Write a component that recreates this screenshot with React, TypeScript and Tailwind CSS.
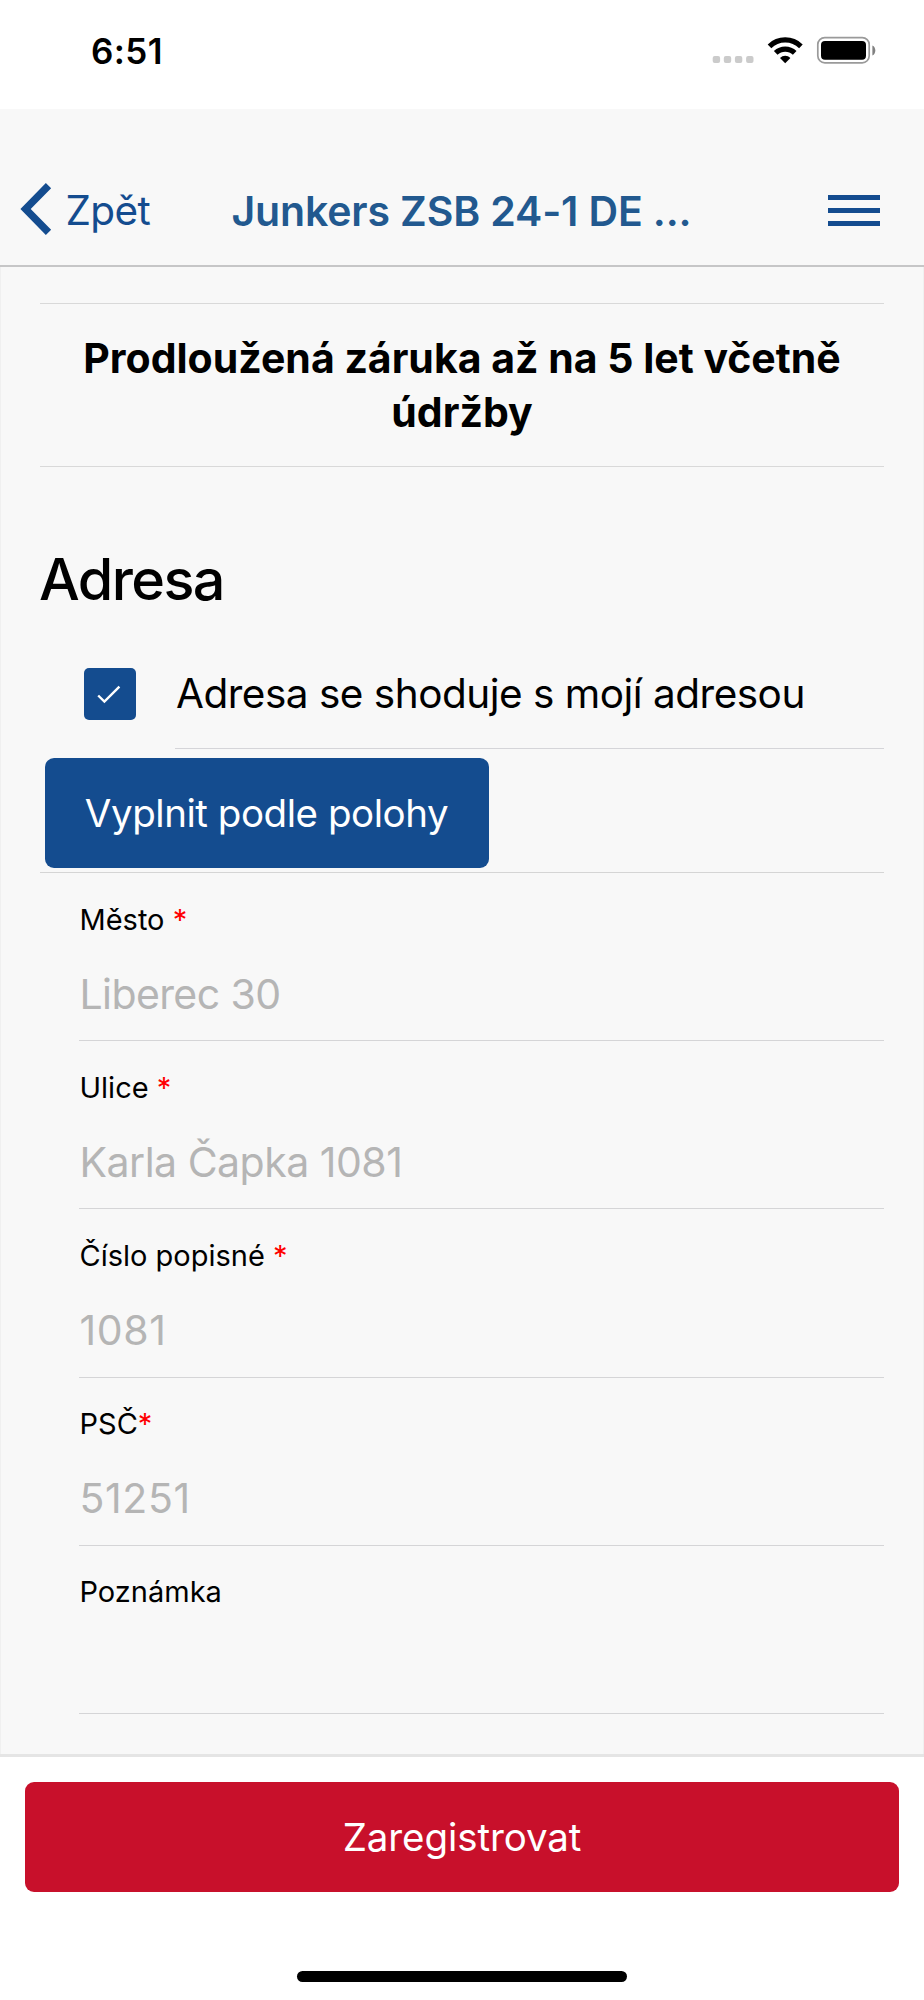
type FieldProps = {
  label: string;
  required?: boolean;
  tightMark?: boolean;
  value?: string;
  valueClass?: string;
};

const fields: FieldProps[] = [
  { label: "Město", required: true, value: "Liberec 30", valueClass: "tracking-[-0.6px]" },
  { label: "Ulice", required: true, value: "Karla Čapka 1081", valueClass: "tracking-[-0.5px]" },
  { label: "Číslo popisné", required: true, value: "1081", valueClass: "tracking-[0.6px]" },
  { label: "PSČ", required: true, tightMark: true, value: "51251", valueClass: "tracking-[0.6px]" },
  { label: "Poznámka" },
];

function StatusBar() {
  return (
    <div className="flex h-[109px] items-start justify-between bg-white pr-[48px] pl-[91px]">
      <span className="mt-[31px] text-[35px] leading-[41px] font-semibold tracking-[0.4px]">6:51</span>
      <svg className="mt-[30px]" width="164" height="40" viewBox="712 30 164 40">
        <g fill="#cbcbcb">
          <rect x="712.7" y="56" width="7.4" height="7" rx="2" />
          <rect x="723.8" y="56" width="7.4" height="7" rx="2" />
          <rect x="734.9" y="56" width="7.4" height="7" rx="2" />
          <rect x="746.1" y="56" width="7.4" height="7" rx="2" />
        </g>
        <g fill="none" stroke="#000" strokeWidth="5.2">
          <path d="M769.5 46.3a22.6 22.6 0 0 1 31.4 0" />
          <path d="M775.7 52.9a13.6 13.6 0 0 1 19 0" />
        </g>
        <path d="M785.2 63.2l-5.2-5.2a7.4 7.4 0 0 1 10.4 0z" />
        <rect x="817.8" y="37.6" width="51.4" height="25.2" rx="7" fill="none" stroke="#9a9a9a" strokeWidth="1.7" />
        <rect x="821" y="41" width="45" height="18.8" rx="4" />
        <path d="M872.4 45.5c3.9 1.6 3.9 8.4 0 10z" fill="#808080" />
      </svg>
    </div>
  );
}

function NavBar() {
  return (
    <header className="flex h-[158px] items-end border-b-2 border-[#c6c6c7] pb-[26px] pl-5">
      <button className="flex w-[211px] items-center text-[#144c8f]">
        <svg width="32" height="52" viewBox="0 0 32 52" className="mb-[4px]" fill="none" stroke="currentColor" strokeWidth="7.4">
          <path d="M28.5 2.6L5.6 26l22.9 23.4" />
        </svg>
        <span className="ml-[13.5px] text-[40.5px] leading-[48px] tracking-[-0.6px]">Zpět</span>
      </button>
      <h1 className="mb-[4px] w-[597px] pl-[0.5px] text-[41px] leading-[48px] font-semibold tracking-[-0.15px] text-[#22598f]">
        Junkers ZSB 24-1 DE ...
      </h1>
      <button className="mb-[13px] flex h-[31px] w-[52px] flex-col justify-between">
        <span className="h-[5px] w-full bg-[#144c8f]" />
        <span className="h-[5px] w-full bg-[#144c8f]" />
        <span className="h-[5px] w-full bg-[#144c8f]" />
      </button>
    </header>
  );
}

function Field({ label, required, tightMark, value, valueClass }: FieldProps) {
  return (
    <div className="ml-[39px] flex h-[168.2px] flex-col border-b border-[#d5d5d7]">
      <div className="mt-[26.5px] h-10 pl-[0.5px] text-[29px] leading-10 whitespace-pre">
        {label}
        {required && <span className="text-[#ff0000]">{tightMark ? "*" : " *"}</span>}
      </div>
      <div className={`mt-[29px] h-[50px] pl-[0.5px] text-[41px] leading-[50px] text-[#b5b5b5] ${valueClass ?? ""}`}>{value}</div>
    </div>
  );
}

export default function App() {
  return (
    <div className="flex h-[2000px] w-[924px] flex-col bg-[#f8f8f8] font-['Inter',sans-serif] text-black">
      <StatusBar />
      <NavBar />
      <main className="flex h-[1487px] flex-col border-x border-[#f0f0f0] px-[39px] pt-9">
        <h2 className="flex h-[164px] flex-col justify-center border-y border-[#d9d9d9] text-center text-[41px] leading-[54px] font-bold">
          Prodloužená záruka až na 5 let včetně údržby
        </h2>
        <h3 className="mt-[77px] -ml-px h-[70px] text-[57.5px] leading-[70px] font-medium tracking-[-1.6px]">Adresa</h3>
        <label className="mt-[27px] flex h-[108px] items-center pl-[44px]">
          <span className="mb-[2px] flex size-[52px] items-center justify-center rounded-[5px] bg-[#144c8f]">
            <svg width="52" height="52" viewBox="0 0 52 52" fill="none" stroke="#fff" strokeWidth="2.4">
              <path d="M14.2 27.5l6.2 6L35.4 18.6" />
            </svg>
          </span>
          <span className="ml-[39px] flex h-full flex-1 items-center border-b border-[#d5d5d9] pl-px text-[40.5px] tracking-[-0.5px]">
            Adresa se shoduje s mojí adresou
          </span>
        </label>
        <div className="flex h-[124px] items-end border-b border-[#d5d5d5] pb-[4px] pl-[4.5px]">
          <button className="h-[110px] w-[444px] rounded-[9px] bg-[#144c8f] pt-px text-[38.5px] tracking-[-0.45px] text-white">
            Vyplnit podle polohy
          </button>
        </div>
        {fields.map((f) => (
          <Field key={f.label} {...f} />
        ))}
      </main>
      <footer className="flex h-[246px] flex-col items-center border-t-[3px] border-[#e5e5e5] bg-white">
        <button className="mt-[24.5px] h-[110px] w-[874px] rounded-[9px] bg-[#c8102b] pt-[2px] text-[38.5px] tracking-[-0.1px] text-white">
          Zaregistrovat
        </button>
        <div className="mt-[79px] h-[11px] w-[330px] rounded-full bg-black" />
      </footer>
    </div>
  );
}
